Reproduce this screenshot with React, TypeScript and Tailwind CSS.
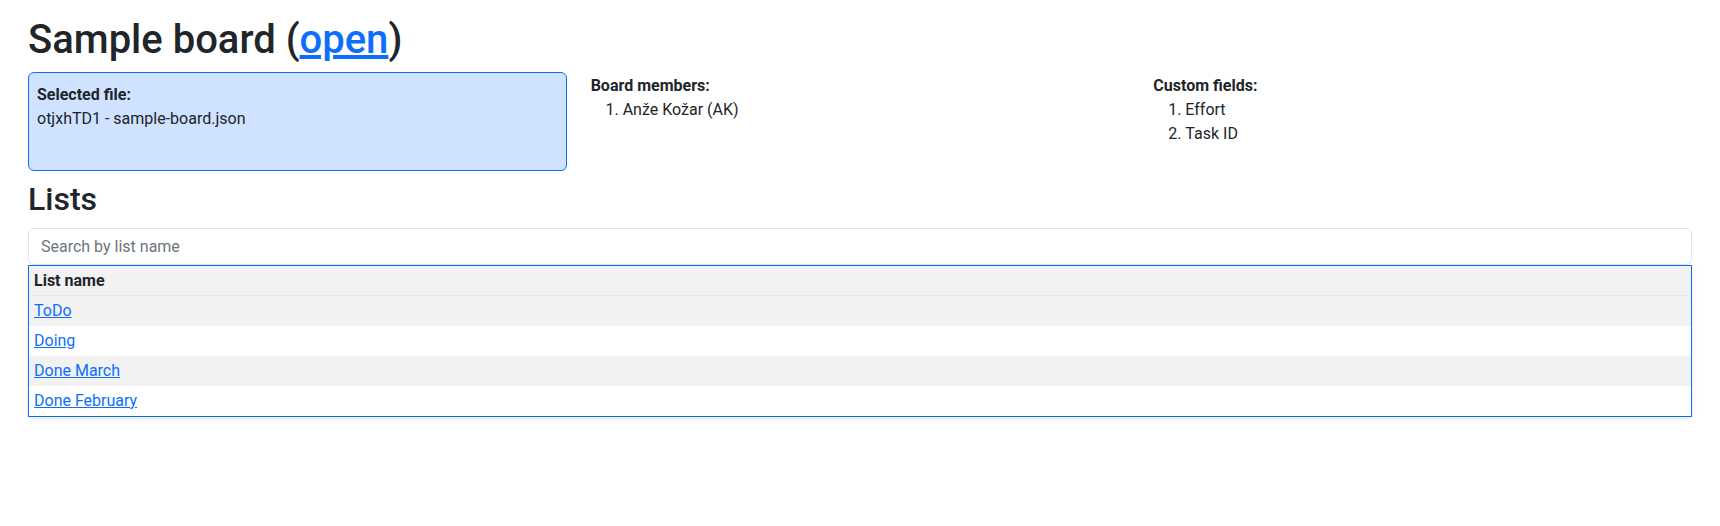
const lists = ['ToDo', 'Doing', 'Done March', 'Done February'];
const members = ['Anže Kožar (AK)'];
const fields = ['Effort', 'Task ID'];

const InfoList = ({ title, items }: { title: string; items: string[] }) => (
  <div className="pt-[2px]">
    <div className="font-bold">{title}</div>
    <ol className="list-decimal pl-8 mb-4">
      {items.map(item => (
        <li key={item}>{item}</li>
      ))}
    </ol>
  </div>
);

export default function App() {
  return (
    <div
      className="px-[28px] pt-4 text-[16px] leading-6 text-[#212529] bg-white min-h-[526px]"
      style={{ fontFamily: 'Roboto, "Open Sans", sans-serif' }}
    >
      <h1 className="text-[40px] leading-[48px] font-medium mb-2">
        Sample board (
        <a href="#" className="text-[#0d6efd] underline">
          open
        </a>
        )
      </h1>

      <div className="grid grid-cols-3 gap-6">
        <div className="h-[99px] rounded-md border border-[#0d6efd] bg-[#cfe2ff] px-2 pt-[10px]">
          <div className="font-bold">Selected file:</div>
          <div>otjxhTD1 - sample-board.json</div>
        </div>
        <InfoList title="Board members:" items={members} />
        <InfoList title="Custom fields:" items={fields} />
      </div>

      <h2 className="text-[32px] leading-[38px] font-medium mt-[9px] mb-[10px]">Lists</h2>

      <input
        type="text"
        placeholder="Search by list name"
        className="block w-full h-[37px] rounded-md border border-[#dee2e6] px-3 placeholder:text-[#6c757d] outline-none"
      />

      <div className="border border-[#0d6efd] shadow-[0_2px_6px_rgba(0,0,0,0.06)]">
        <div className="h-[30px] px-[5px] flex items-center bg-[#f2f2f2] font-bold border-b border-[#e9e9e9]">
          List name
        </div>
        {lists.map((name, i) => (
          <div
            key={name}
            className={`h-[30px] px-[5px] flex items-center shadow-[0_3px_4px_rgba(0,0,0,0.04)] ${
              i % 2 === 0 ? 'bg-[#f2f2f2]' : 'bg-white'
            }`}
          >
            <a href="#" className="text-[#0d6efd] underline">
              {name}
            </a>
          </div>
        ))}
      </div>
    </div>
  );
}
